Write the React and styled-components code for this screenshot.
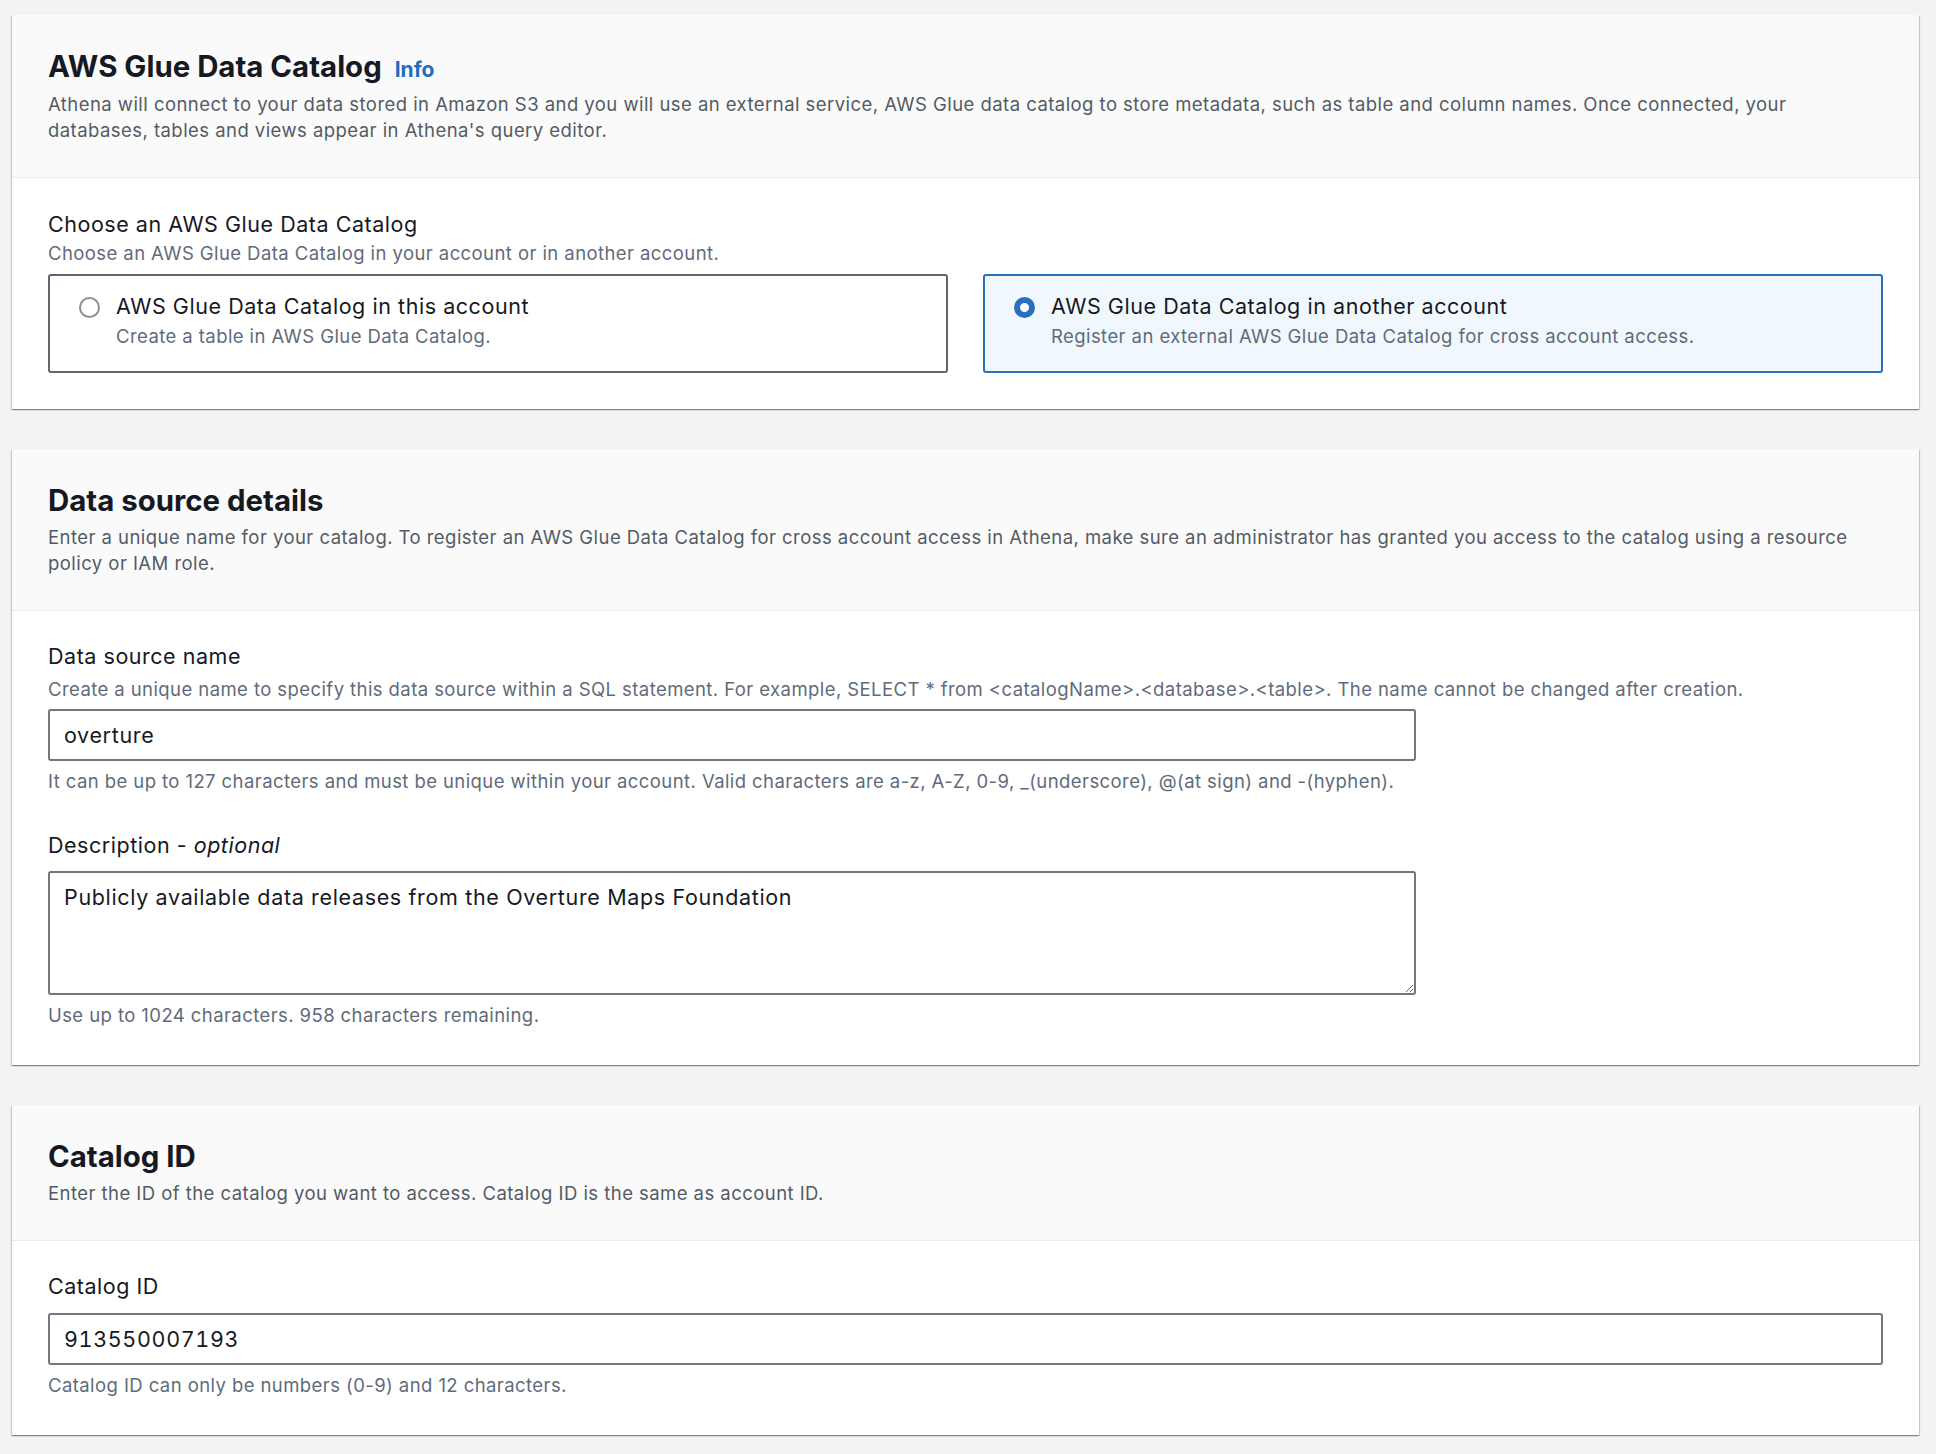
import React from 'react';
import styled, { createGlobalStyle } from 'styled-components';

const GlobalStyle = createGlobalStyle`
  body {
    margin: 0;
    background: #f2f3f3;
    font-family: Inter, "Open Sans", sans-serif;
    color: #16191f;
  }
`;

const Page = styled.div`
  display: flex;
  flex-direction: column;
  gap: 40px;
  padding: 15px 17px 17px 12px;
`;

const Panel = styled.section`
  background: #ffffff;
  box-shadow: 0 1px 1px 0 rgba(0, 28, 36, 0.3), 1px 1px 1px 0 rgba(0, 28, 36, 0.15),
    -1px 1px 1px 0 rgba(0, 28, 36, 0.15);
`;

const PanelHeader = styled.div`
  background: #fafafa;
  border-bottom: 1px solid #eaeded;
  padding: 34px 36px 34px;
`;

const Title = styled.h2`
  margin: 0;
  height: 36px;
  font-size: 29.4px;
  line-height: 36px;
  font-weight: 700;
  display: flex;
  align-items: baseline;
  gap: 13px;
`;

const InfoLink = styled.a`
  font-size: 21px;
  line-height: 24px;
  font-weight: 700;
  color: #1f6ebd;
  text-decoration: none;
`;

const HeaderDesc = styled.p`
  margin: 5.5px 0 0;
  font-size: 18.5px;
  letter-spacing: 0.45px;
  line-height: 26px;
  color: #545b64;
`;

const PanelBody = styled.div`
  padding: ${(p) => p.$pad || '32px 36px 36px'};
  display: flex;
  flex-direction: column;
  gap: 40px;
`;

const Field = styled.div`
  display: flex;
  flex-direction: column;
`;

const Label = styled.label`
  font-size: 21.5px;
  letter-spacing: 0.53px;
  line-height: 26px;
  color: #16191f;
`;

const Optional = styled.i`
  font-style: italic;
`;

const FieldDesc = styled.div`
  margin-top: ${(p) => p.$top || '8.5px'};
  font-size: 18.5px;
  letter-spacing: 0.42px;
  line-height: 22px;
  color: #5f6b7a;
`;

const Input = styled.input`
  margin-top: ${(p) => (p.$afterDesc ? '9px' : '14px')};
  box-sizing: border-box;
  height: 52px;
  width: 100%;
  max-width: ${(p) => p.$max || 'none'};
  border: 2px solid #6f7780;
  border-radius: 3px;
  padding: 0 14px;
  font-family: inherit;
  font-size: 21.5px;
  letter-spacing: 0.65px;
  font-variant-numeric: tabular-nums;
  color: #16191f;
  background: #fff;
  outline: none;
`;

const TextArea = styled.textarea`
  margin-top: 13px;
  box-sizing: border-box;
  height: 124px;
  width: 100%;
  max-width: 1368px;
  border: 2px solid #6f7780;
  border-radius: 3px;
  padding: 11px 14px;
  font-family: inherit;
  font-size: 21.5px;
  letter-spacing: 0.65px;
  line-height: 26px;
  color: #16191f;
  background: #fff;
  outline: none;
  resize: vertical;
`;

const Hint = styled.div`
  margin-top: 9px;
  font-size: 18.5px;
  letter-spacing: 0.42px;
  line-height: 22px;
  color: #5f6b7a;
`;

const Tiles = styled.div`
  margin-top: 10px;
  display: grid;
  grid-template-columns: 1fr 1fr;
  gap: 35px;
`;

const Tile = styled.div`
  box-sizing: border-box;
  height: 99px;
  display: flex;
  align-items: flex-start;
  gap: 16px;
  padding: 16px 29px 0;
  border: 2px solid ${(p) => (p.$checked ? '#2a6fba' : '#5f6770')};
  border-radius: 3px;
  background: ${(p) => (p.$checked ? '#f1f8fd' : '#ffffff')};
`;

const Radio = styled.span`
  flex: none;
  box-sizing: border-box;
  width: 21px;
  height: 21px;
  margin-top: 5px;
  border-radius: 50%;
  background: #fff;
  border: ${(p) => (p.$checked ? '6px solid #2a6fba' : '2px solid #8a9199')};
`;

const TileText = styled.div`
  display: flex;
  flex-direction: column;
`;

const TileLabel = styled.div`
  font-size: 21.5px;
  letter-spacing: 0.55px;
  line-height: 28px;
  color: #16191f;
`;

const TileDesc = styled.div`
  margin-top: 5px;
  font-size: 18.5px;
  letter-spacing: 0.42px;
  line-height: 22px;
  color: #5f6b7a;
`;

const SourceTile = ({ checked, label, desc }) => (
  <Tile $checked={checked}>
    <Radio $checked={checked} />
    <TileText>
      <TileLabel>{label}</TileLabel>
      <TileDesc>{desc}</TileDesc>
    </TileText>
  </Tile>
);

export default function App() {
  return (
    <>
      <GlobalStyle />
      <Page>
        <Panel>
          <PanelHeader>
            <Title>
              AWS Glue Data Catalog <InfoLink href="#">Info</InfoLink>
            </Title>
            <HeaderDesc>
              Athena will connect to your data stored in Amazon S3 and you will use an external service, AWS Glue
              data catalog to store metadata, such as table and column names. Once connected, your databases, tables
              and views appear in Athena's query editor.
            </HeaderDesc>
          </PanelHeader>
          <PanelBody $pad="33px 36px 36px">
            <Field>
              <Label>Choose an AWS Glue Data Catalog</Label>
              <FieldDesc $top="5px">Choose an AWS Glue Data Catalog in your account or in another account.</FieldDesc>
              <Tiles>
                <SourceTile label="AWS Glue Data Catalog in this account" desc="Create a table in AWS Glue Data Catalog." />
                <SourceTile
                  checked
                  label="AWS Glue Data Catalog in another account"
                  desc="Register an external AWS Glue Data Catalog for cross account access."
                />
              </Tiles>
            </Field>
          </PanelBody>
        </Panel>

        <Panel>
          <PanelHeader>
            <Title>Data source details</Title>
            <HeaderDesc>
              Enter a unique name for your catalog. To register an AWS Glue Data Catalog for cross account access in
              Athena, make sure an administrator has granted you access to the catalog using a resource policy or IAM
              role.
            </HeaderDesc>
          </PanelHeader>
          <PanelBody $pad="32px 36px 39px">
            <Field>
              <Label>Data source name</Label>
              <FieldDesc>
                Create a unique name to specify this data source within a SQL statement. For example, SELECT * from
                &lt;catalogName&gt;.&lt;database&gt;.&lt;table&gt;. The name cannot be changed after creation.
              </FieldDesc>
              <Input $afterDesc $max="1368px" defaultValue="overture" />
              <Hint>
                It can be up to 127 characters and must be unique within your account. Valid characters are a-z, A-Z,
                0-9, _(underscore), @(at sign) and -(hyphen).
              </Hint>
            </Field>
            <Field>
              <Label>
                Description - <Optional>optional</Optional>
              </Label>
              <TextArea defaultValue="Publicly available data releases from the Overture Maps Foundation" />
              <Hint>Use up to 1024 characters. 958 characters remaining.</Hint>
            </Field>
          </PanelBody>
        </Panel>

        <Panel>
          <PanelHeader>
            <Title>Catalog ID</Title>
            <HeaderDesc>Enter the ID of the catalog you want to access. Catalog ID is the same as account ID.</HeaderDesc>
          </PanelHeader>
          <PanelBody $pad="32px 36px 39px">
            <Field>
              <Label>Catalog ID</Label>
              <Input defaultValue="913550007193" />
              <Hint>Catalog ID can only be numbers (0-9) and 12 characters.</Hint>
            </Field>
          </PanelBody>
        </Panel>
      </Page>
    </>
  );
}
